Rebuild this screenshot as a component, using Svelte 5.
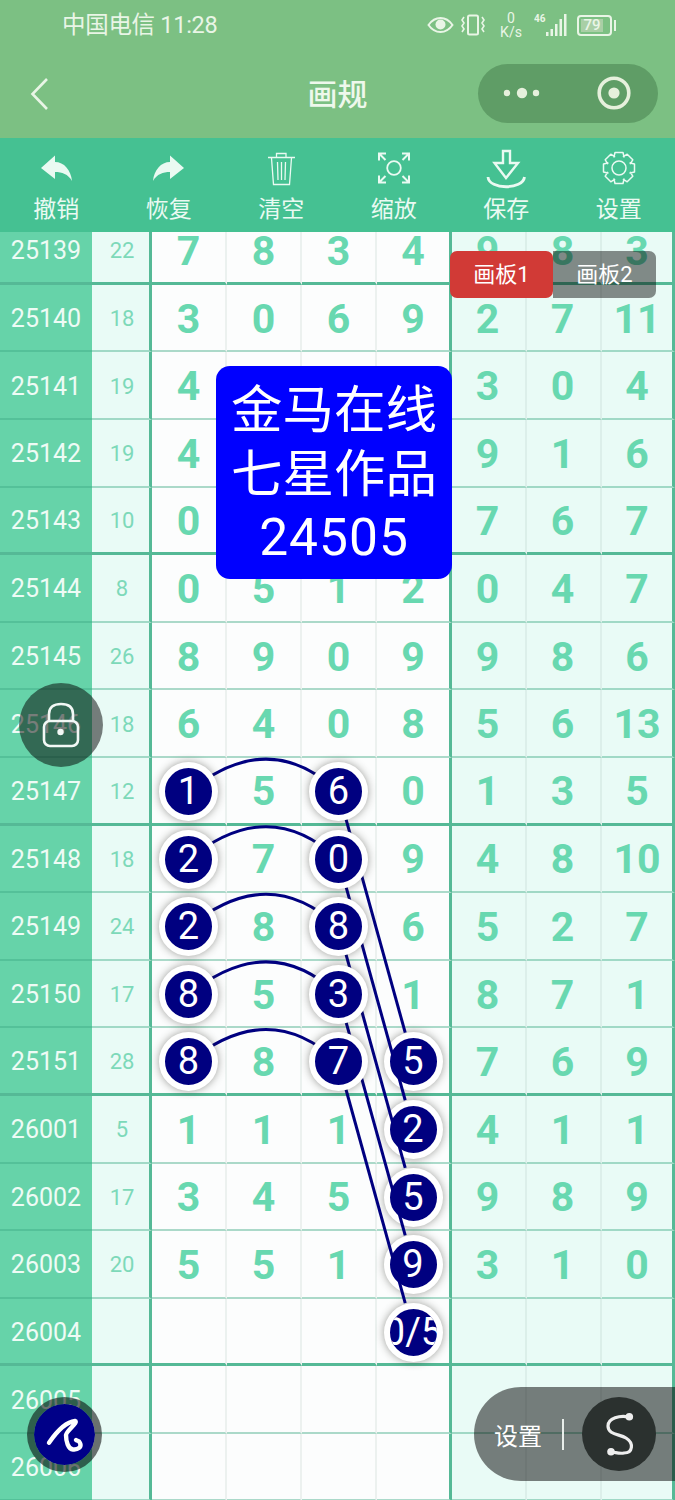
<script>
  const ROW = 67.6;
  const rows = [
    ['25139','22','7','8','3','4','9','8','3'],
    ['25140','18','3','0','6','9','2','7','11'],
    ['25141','19','4','','','','3','0','4'],
    ['25142','19','4','','','','9','1','6'],
    ['25143','10','0','','','','7','6','7'],
    ['25144','8','0','5','1','2','0','4','7'],
    ['25145','26','8','9','0','9','9','8','6'],
    ['25146','18','6','4','0','8','5','6','13'],
    ['25147','12','1','5','6','0','1','3','5'],
    ['25148','18','2','7','0','9','4','8','10'],
    ['25149','24','2','8','8','6','5','2','7'],
    ['25150','17','8','5','3','1','8','7','1'],
    ['25151','28','8','8','7','5','7','6','9'],
    ['26001','5','1','1','1','2','4','1','1'],
    ['26002','17','3','4','5','5','9','8','9'],
    ['26003','20','5','5','1','9','3','1','0'],
    ['26004','','','','','0/5','','',''],
    ['26005','','','','','','','',''],
    ['26006','','','','','','','','']
  ];
  const marked = new Set(['8-0','8-2','9-0','9-2','10-0','10-2','11-0','11-2','12-0','12-2','12-3','13-3','14-3','15-3','16-3']);
  const cx = (c) => 188.5 + 75 * c;
  const cy = (r) => 34.3 + ROW * r;
  const arcs = [8, 9, 10, 11, 12].map(
    (r) => `M${cx(0)} ${cy(r)} Q${cx(1) + 5} ${cy(r) - 66} ${cx(2)} ${cy(r)}`
  );
  const ties = [8, 9, 10, 11, 12].map((r) => {
    const dx = 75, dy = ROW * 4, len = Math.hypot(dx, dy), k = (len - 31) / len;
    return { x1: cx(2), y1: cy(r), x2: cx(2) + dx * k, y2: cy(r) + dy * k };
  });
  const gear = (() => {
    let d = '';
    const n = 8, R = 16, r = 12.2, c = [20, 16];
    for (let i = 0; i < n; i++) {
      const a = (i * 2 * Math.PI) / n - Math.PI / 2, w = 0.25, v = 0.42;
      const p = (rad, ang) => `${(c[0] + rad * Math.cos(ang)).toFixed(1)} ${(c[1] + rad * Math.sin(ang)).toFixed(1)}`;
      d += `${i ? 'L' : 'M'}${p(r, a - v)} L${p(R, a - w)} L${p(R, a + w)} L${p(r, a + v)} `;
    }
    return d + 'Z';
  })();
  const cellClass = (ri, ci) => {
    const cls = ['cell'];
    if (ci === 0) cls.push('issue');
    else if (ci === 1) cls.push('sum');
    else cls.push(ci >= 6 ? 'right' : 'main');
    if (ci === 1 || ci === 5 || ci === 8) cls.push('edge');
    if (ri % 4 === 0) cls.push('thick');
    return cls.join(' ');
  };
</script>

<div class="app">
  <header class="top">
    <div class="status">
      <span class="carrier">中国电信 11:28</span>
      <div class="status-right">
        <svg class="st-eye" width="27" height="18" viewBox="0 0 27 18"><path d="M1.5 9C5 4 9 2 13.5 2S22 4 25.5 9C22 14 18 16 13.5 16S5 14 1.5 9Z" fill="none" stroke="currentColor" stroke-width="2"/><circle cx="13.5" cy="8.5" r="5" fill="currentColor"/></svg>
        <svg class="st-vib" width="26" height="22" viewBox="0 0 26 22"><rect x="8" y="1.5" width="10" height="19" rx="1.5" fill="none" stroke="currentColor" stroke-width="2"/><path d="M4 3l-2 3 2 3-2 3 2 3-2 3M22 3l2 3-2 3 2 3-2 3 2 3" fill="none" stroke="currentColor" stroke-width="1.6"/></svg>
        <span class="speed"><b>0</b><b>K/s</b></span>
        <svg class="st-sig" width="34" height="24" viewBox="0 0 34 24"><text x="0" y="9" class="sig-t">46</text><g fill="currentColor"><rect x="12" y="19" width="2.5" height="4"/><rect x="16.5" y="16" width="2.5" height="7"/><rect x="21" y="11" width="2.5" height="12"/><rect x="25.5" y="6" width="2.5" height="17"/><rect x="30" y="1" width="2.5" height="22"/></g></svg>
        <div class="battery"><span class="fill">79</span></div>
        <span class="cap"></span>
      </div>
    </div>
    <nav class="nav">
      <svg class="back" width="20" height="34" viewBox="0 0 20 34"><path d="M17 2L2.5 17 17 32" fill="none" stroke="currentColor" stroke-width="2.6"/></svg>
      <h1>画规</h1>
      <div class="capsule">
        <svg width="44" height="14" viewBox="0 0 44 14"><circle cx="7" cy="7" r="3.2" fill="currentColor"/><circle cx="22" cy="7" r="5.2" fill="currentColor"/><circle cx="36" cy="7" r="3.2" fill="currentColor"/></svg>
        <svg width="36" height="36" viewBox="0 0 36 36"><circle cx="18" cy="18" r="14.8" fill="none" stroke="currentColor" stroke-width="3.6"/><circle cx="18" cy="18" r="5.6" fill="currentColor"/></svg>
      </div>
    </nav>
  </header>

  <div class="toolbar">
    <div class="tool">
      <svg width="40" height="36" viewBox="0 0 40 36"><path d="M5 16L19 3.5V10C28 10 35 18 36 29C32 22 26 20 19 20V27Z" fill="currentColor"/></svg>
      <span>撤销</span>
    </div>
    <div class="tool">
      <svg width="40" height="36" viewBox="0 0 40 36"><path d="M35 16L21 3.5V10C12 10 5 18 4 29C8 22 14 20 21 20V27Z" fill="currentColor"/></svg>
      <span>恢复</span>
    </div>
    <div class="tool">
      <svg width="40" height="36" viewBox="0 0 40 36"><path d="M7 5.5H34M15.500 5V1.500H25V5M10.500 6L12.500 32.500H28.500L30.500 6M16.500 10L17 28M20.500 10V28M24.500 10L24 28" fill="none" stroke="currentColor" stroke-width="1.3"/></svg>
      <span>清空</span>
    </div>
    <div class="tool">
      <svg width="40" height="36" viewBox="0 0 40 36"><circle cx="20" cy="16" r="6.800" fill="none" stroke="currentColor" stroke-width="1.800"/><path d="M12 1.500H5V8.500M5.500 2L11.500 8M28 1.500H35V8.500M34.500 2L28.500 8M12 30.500H5V23.500M5.500 30L11.500 24M28 30.500H35V23.500M34.500 30L28.500 24" fill="none" stroke="currentColor" stroke-width="2"/></svg>
      <span>缩放</span>
    </div>
    <div class="tool">
      <svg width="40" height="36" viewBox="0 0 40 36"><path d="M17 -1H24V11H32L20 26L8.500 11H17Z" fill="none" stroke="currentColor" stroke-width="2.400"/><path d="M2 25C3 38 37 38 38.500 25" fill="none" stroke="currentColor" stroke-width="2.800"/></svg>
      <span>保存</span>
    </div>
    <div class="tool">
      <svg width="40" height="36" viewBox="0 0 40 36"><path d={gear} fill="none" stroke="currentColor" stroke-width="1.500" stroke-linejoin="round"/><circle cx="20" cy="16" r="7" fill="none" stroke="currentColor" stroke-width="1.500"/></svg>
      <span>设置</span>
    </div>
  </div>

  <main class="board">
    <div class="sheet">
      {#each rows as row, ri}
        {#each row as value, ci}
          <div class={cellClass(ri, ci)}>
            {#if ci > 1 && marked.has(`${ri}-${ci - 2}`)}
              <span class={ci === 5 ? 'ball low' : 'ball high'}>{value}</span>
            {:else}
              {value}
            {/if}
          </div>
        {/each}
      {/each}
      <svg class="links" width="675" height="1285" viewBox="0 0 675 1285">
        {#each arcs as d}
          <path {d} fill="none" stroke="#000080" stroke-width="3"/>
        {/each}
        {#each ties as t}
          <line x1={t.x1} y1={t.y1} x2={t.x2} y2={t.y2} stroke="#000080" stroke-width="3"/>
        {/each}
      </svg>
    </div>

    <div class="tabs">
      <span class="tab on">画板1</span>
      <span class="tab">画板2</span>
    </div>

    <div class="card">金马在线<br />七星作品<br /><span class="card-num">24505</span></div>

    <div class="lock">
      <svg width="40" height="46" viewBox="0 0 40 46"><path d="M8 20V12C8 5 13 2 20 2S32 5 32 12V20" fill="none" stroke="currentColor" stroke-width="2.600"/><rect x="3" y="19" width="34" height="25" rx="6" fill="none" stroke="currentColor" stroke-width="2.600"/><circle cx="19.500" cy="30" r="3.200" fill="currentColor"/></svg>
    </div>

    <div class="brush">
      <svg width="60" height="60" viewBox="0 0 60 60"><path d="M14 37.700C20 29 30 17 40 16C44 17 31 26 31 30C31 36 33 44 38 44.500C43 45 47 42 45 38C44 35 42 36 41 35" fill="none" stroke="#fff" stroke-width="4.400" stroke-linecap="round" stroke-linejoin="round"/></svg>
    </div>

    <div class="dock">
      <span class="dock-label">设置</span>
      <i class="dock-sep"></i>
      <div class="dock-btn">
        <svg width="74" height="74" viewBox="0 0 74 74"><path d="M47 20C38 18 26 21 26 29C26 38 38 37 44 41C52 46 51 56 42 56C37 57 33 55 29 55" fill="none" stroke="#eee" stroke-width="3.200"/><circle cx="47.300" cy="19.700" r="3.800" fill="#eee"/><circle cx="29" cy="54.700" r="3.800" fill="#eee"/></svg>
      </div>
    </div>
  </main>
</div>

<style>
  :global(body) { margin: 0; }
  .app {
    width: 675px;
    height: 1500px;
    overflow: hidden;
    font-family: Roboto, "Noto Sans CJK SC", sans-serif;
  }
  .top { background: #7cc083; color: #e9f5e6; height: 138px; }
  .status {
    box-sizing: border-box;
    height: 52px;
    display: flex;
    align-items: center;
    justify-content: space-between;
    padding: 0 59px 2px 62px;
  }
  .carrier { font-size: 23.5px; letter-spacing: -0.3px; margin-top: -4px; }
  .status-right { display: flex; align-items: center; }
  .st-eye { margin-right: 6px; }
  .st-vib { margin-right: 12px; }
  .speed { display: flex; flex-direction: column; align-items: center; width: 26px; margin-right: 10px; }
  .speed b { font-weight: 400; font-size: 14px; line-height: 14px; }
  .st-sig { margin-right: 9px; }
  .sig-t { font-size: 10px; font-weight: 700; fill: currentColor; }
  .battery {
    box-sizing: border-box;
    width: 35px;
    height: 21px;
    border: 2px solid currentColor;
    border-radius: 4px;
    padding: 2px;
    display: flex;
  }
  .fill {
    width: 22px;
    background: #a9cfa6;
    color: #eaf5e6;
    font-size: 15px;
    line-height: 13px;
    text-align: center;
    font-weight: 500;
  }
  .cap { width: 2px; height: 11px; background: currentColor; margin-left: 2px; }
  .nav {
    height: 86px;
    position: relative;
    display: flex;
    align-items: center;
    justify-content: space-between;
    padding: 0 17px 0 30px;
  }
  .back { margin-top: -2px; }
  .nav h1 {
    position: absolute;
    left: 0;
    right: 0;
    top: 21px;
    margin: 0;
    text-align: center;
    font-size: 30px;
    line-height: 44px;
    font-weight: 500;
    color: #eef8ec;
  }
  .capsule {
    box-sizing: border-box;
    width: 180px;
    height: 59px;
    margin-top: -4px;
    border-radius: 30px;
    background: #5f9d66;
    color: #e6f0dc;
    display: flex;
    align-items: center;
    justify-content: space-between;
    padding: 0 26px 0 22px;
  }
  .toolbar {
    height: 94px;
    background: #45c192;
    color: #eafaf2;
    display: grid;
    grid-template-columns: repeat(6, 112.5px);
  }
  .tool {
    display: flex;
    flex-direction: column;
    align-items: center;
    padding-top: 14px;
  }
  .tool svg { overflow: visible; display: block; }
  .tool span { font-size: 23px; line-height: 34px; margin-top: 5px; }
  .board {
    position: relative;
    height: 1268px;
    overflow: hidden;
  }
  .sheet {
    position: relative;
    margin-top: -14.8px;
    display: grid;
    grid-template-columns: 92px 60px repeat(6, 75px) 73px;
    grid-auto-rows: 67.6px;
  }
  .cell {
    box-sizing: border-box;
    display: flex;
    align-items: center;
    justify-content: center;
    padding-top: 2px;
    border-bottom: 2px solid rgba(60, 170, 130, 0.42);
    border-right: 2px solid rgba(150, 180, 170, 0.16);
    white-space: nowrap;
  }
  .cell.thick { border-bottom: 3px solid #55b996; }
  .issue { background: #66d3a9; color: #eefbf5; font-size: 25px; border-right: 0; }
  .sum { background: #e9fbf6; color: #7dd9b9; font-size: 22px; padding-left: 3px; }
  .main, .right { color: #68d8b0; font-size: 41px; font-weight: 700; }
  .main { background: #fcfdfd; }
  .right { background: #e9fbf6; }
  .right:not(.edge) { padding-right: 2px; }
  .cell.edge { border-right: 3px solid #55b996; }
  .ball {
    box-sizing: border-box;
    flex: none;
    width: 59px;
    height: 59px;
    border: 6px solid #fff;
    border-radius: 50%;
    background: #000080;
    color: #fff;
    font-size: 38px;
    font-weight: 400;
    line-height: 47px;
    text-align: center;
    overflow: hidden;
    white-space: nowrap;
    display: flex;
    justify-content: center;
    box-shadow: 0 0 9px rgba(40, 40, 30, 0.45);
    position: relative;
  }
  .ball.low { z-index: 1; }
  .ball.high { z-index: 3; }
  .links { position: absolute; left: 0; top: 0; z-index: 2; pointer-events: none; }
  .tabs {
    position: absolute;
    z-index: 5;
    left: 450px;
    top: 19px;
    display: flex;
    color: #fff;
    font-size: 22px;
  }
  .tab {
    width: 103px;
    height: 47px;
    line-height: 47px;
    text-align: center;
    background: rgba(0, 0, 0, 0.45);
    border-radius: 0 7px 7px 0;
  }
  .tab.on { background: #d13a36; border-radius: 7px; }
  .card {
    position: absolute;
    z-index: 5;
    left: 216px;
    top: 134px;
    width: 236px;
    height: 213px;
    box-sizing: border-box;
    padding-top: 13px;
    background: #0000ff;
    border-radius: 14px;
    color: #fff;
    font-size: 51.5px;
    line-height: 63.500px;
    text-align: center;
  }
  .card-num { letter-spacing: 1px; }
  .lock {
    position: absolute;
    z-index: 5;
    left: 19px;
    top: 451px;
    width: 84px;
    height: 84px;
    border-radius: 50%;
    background: rgba(0, 0, 0, 0.5);
    color: #f2f8f5;
    display: flex;
    align-items: center;
    justify-content: center;
  }
  .brush {
    position: absolute;
    z-index: 5;
    left: 27px;
    top: 1165px;
    box-sizing: border-box;
    width: 75px;
    height: 75px;
    border: 7px solid rgba(0, 0, 0, 0.55);
    border-radius: 50%;
    background: #000088;
    background-clip: padding-box;
    display: flex;
    align-items: center;
    justify-content: center;
  }
  .dock {
    position: absolute;
    z-index: 5;
    right: 0;
    top: 1155px;
    width: 201px;
    height: 94px;
    border-radius: 47px 0 0 47px;
    background: rgba(0, 0, 0, 0.5);
    display: flex;
    align-items: center;
    padding-left: 20px;
    box-sizing: border-box;
    color: #fff;
  }
  .dock-label { font-size: 24px; width: 68px; }
  .dock-sep { width: 2px; height: 31px; background: #e8eeea; }
  .dock-btn {
    width: 74px;
    height: 74px;
    margin-left: 18px;
    border-radius: 50%;
    background: #2b312f;
  }
  .dock-btn svg { display: block; }
</style>
